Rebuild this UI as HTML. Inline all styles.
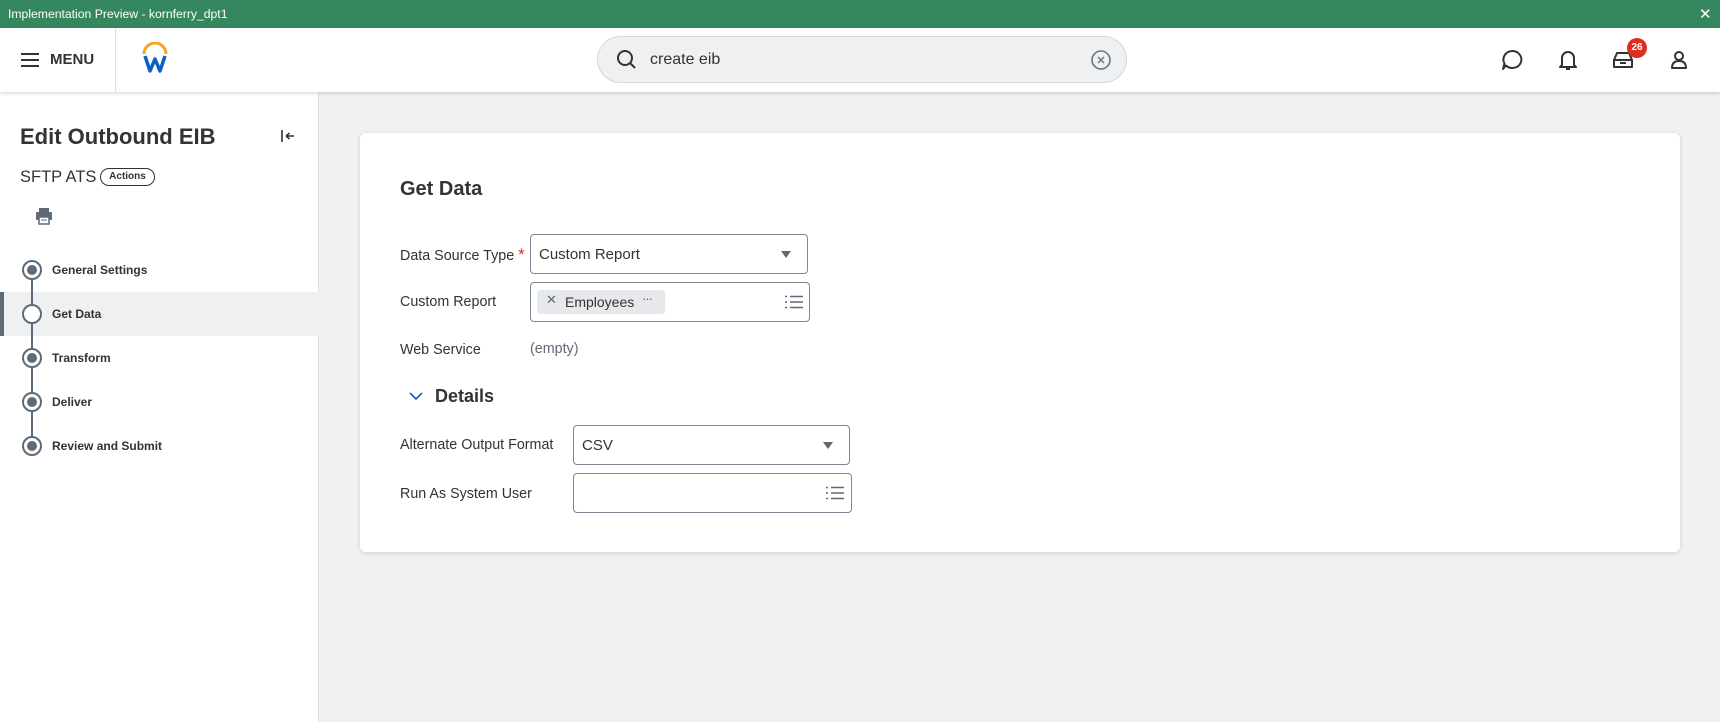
<!DOCTYPE html>
<html><head><meta charset="utf-8"><style>
*{box-sizing:border-box;margin:0;padding:0}
body{width:1720px;height:722px;overflow:hidden;background:#f0f1f2;font-family:"Liberation Sans",Arial,sans-serif;color:#333;position:relative}
.abs{position:absolute}
.top{left:0;top:0;width:1720px;height:28px;background:#35875f;color:#fff;font-size:12.2px;line-height:28px;padding-left:8px}
.hdr{left:0;top:28px;width:1720px;height:64px;background:#fff;box-shadow:0 2px 3px rgba(0,0,0,.12);z-index:2}
.side{left:0;top:92px;width:319px;height:630px;background:#fff;border-right:1px solid #dcdfe2}
.card{left:360px;top:133px;width:1320px;height:419px;background:#fff;border-radius:6px;box-shadow:0 1px 4px rgba(0,0,0,.15)}
.lbl{font-size:14.3px;color:#333}
.box{border:1px solid #7b8794;border-radius:4px;background:#fff}
.step{left:52px;font-size:12px;font-weight:bold;color:#333}
.circ{left:22px;width:20px;height:20px;border:2px solid #5e6a75;border-radius:50%;background:#fff}
.circ.f::after{content:"";position:absolute;left:3px;top:3px;width:10px;height:10px;border-radius:50%;background:#5e6a75}
</style></head><body>
<div class="abs top">Implementation Preview - kornferry_dpt1</div>
<div class="abs" style="left:1699px;top:5px;color:#fff;font-size:15px">✕</div>
<div class="abs hdr">
  <svg class="abs" style="left:20px;top:24px" width="20" height="16"><path d="M1 2H19M1 8H19M1 14H19" stroke="#333" stroke-width="2"/></svg>
  <div class="abs" style="left:50px;top:23px;font-size:15px;font-weight:bold;color:#333">MENU</div>
  <div class="abs" style="left:115px;top:0;width:1px;height:64px;background:#dcdfe2"></div>
  <svg class="abs" style="left:140px;top:14px" width="30" height="32"><path d="M4 12 A11 11 0 0 1 26 12" stroke="#f5a623" stroke-width="3" fill="none"/><path d="M5 14 L10 29 L15 17 L20 29 L25 14" stroke="#0a5fc4" stroke-width="3.5" fill="none" stroke-linejoin="round"/></svg>
  <div class="abs" style="left:597px;top:8px;width:530px;height:47px;border:1px solid #d4d7db;border-radius:24px;background:#eff0f2"></div>
  <svg class="abs" style="left:616px;top:21px" width="22" height="22"><circle cx="9" cy="9" r="7" stroke="#333" stroke-width="2" fill="none"/><path d="M14 14 L19 19" stroke="#333" stroke-width="2"/></svg>
  <div class="abs" style="left:650px;top:23px;font-size:16px;color:#333">create eib</div>
  <svg class="abs" style="left:1090px;top:21px" width="22" height="22"><circle cx="11" cy="11" r="9" stroke="#6b7580" stroke-width="1.6" fill="none"/><path d="M8 8L14 14M14 8L8 14" stroke="#6b7580" stroke-width="1.5"/></svg>
  <svg class="abs" style="left:1500px;top:20px" width="24" height="24"><path d="M12 3a9 8.5 0 1 1 -6 14.5 L3 21 L4.5 15.5 A9 8.5 0 0 1 12 3z" stroke="#333" stroke-width="2" fill="none" stroke-linejoin="round"/></svg>
  <svg class="abs" style="left:1556px;top:19px" width="24" height="26"><path d="M6 18V11a6 6 0 0 1 12 0v7l2 2H4z" stroke="#333" stroke-width="2" fill="none" stroke-linejoin="round"/><path d="M10 22h4" stroke="#333" stroke-width="2"/></svg>
  <svg class="abs" style="left:1611px;top:20px" width="24" height="24"><path d="M3 12 L6 5 H18 L21 12 V19 H3z M3 12 H21 M9 15 H15" stroke="#333" stroke-width="2" fill="none" stroke-linejoin="round"/></svg>
  <div class="abs" style="left:1627px;top:10px;width:20px;height:20px;border-radius:10px;background:#de2e21;color:#fff;font-size:10px;font-weight:bold;text-align:center;line-height:20px">26</div>
  <svg class="abs" style="left:1668px;top:21px" width="22" height="22"><circle cx="11" cy="7" r="4" stroke="#333" stroke-width="2" fill="none"/><path d="M4 19 Q4 12 11 12 Q18 12 18 19z" stroke="#333" stroke-width="2" fill="none" stroke-linejoin="round"/></svg>
</div>
<div class="abs side">
  <div class="abs" style="left:20px;top:32px;font-size:22px;font-weight:bold;color:#333">Edit Outbound EIB</div>
  <svg class="abs" style="left:280px;top:36px" width="16" height="16"><path d="M2 2V14M6 8H14M6 8L9.5 5M6 8L9.5 11" stroke="#333" stroke-width="1.6" fill="none"/></svg>
  <div class="abs" style="left:20px;top:76px;font-size:16.5px;color:#333">SFTP ATS</div>
  <div class="abs" style="left:100px;top:76px;width:55px;height:18px;border:1.5px solid #333;border-radius:9px;font-size:10px;font-weight:bold;text-align:center;line-height:15px">Actions</div>
  <svg class="abs" style="left:35px;top:115px" width="18" height="18"><rect x="4" y="1" width="10" height="4" fill="#5e6a75"/><rect x="1" y="5" width="16" height="8" rx="1" fill="#5e6a75"/><rect x="4" y="10" width="10" height="7" fill="#fff" stroke="#5e6a75" stroke-width="1.5"/><path d="M6 13h6" stroke="#5e6a75"/></svg>
  <div class="abs" style="left:0;top:200px;width:319px;height:44px;background:#eff0f2"></div>
  <div class="abs" style="left:0;top:200px;width:4px;height:44px;background:#5e6a75"></div>
  <div class="abs" style="left:31px;top:178px;width:2px;height:176px;background:#5e6a75"></div>
  <div class="abs circ f" style="top:168px"></div><div class="abs step" style="top:171px">General Settings</div>
  <div class="abs circ" style="top:212px"></div><div class="abs step" style="top:215px">Get Data</div>
  <div class="abs circ f" style="top:256px"></div><div class="abs step" style="top:259px">Transform</div>
  <div class="abs circ f" style="top:300px"></div><div class="abs step" style="top:303px">Deliver</div>
  <div class="abs circ f" style="top:344px"></div><div class="abs step" style="top:347px">Review and Submit</div>
</div>
<div class="abs card">
  <div class="abs" style="left:40px;top:45px;font-size:20px;font-weight:bold;color:#333">Get Data</div>
  <div class="abs lbl" style="left:40px;top:112px">Data Source Type <span style="color:#de2e21;font-size:17px">*</span></div>
  <div class="abs box" style="left:170px;top:101px;width:278px;height:40px"><div class="abs" style="left:8px;top:11px;font-size:15px;color:#333">Custom Report</div><div class="abs" style="right:16px;top:16px;border:5.5px solid transparent;border-top:7px solid #5e6a75;border-bottom:0"></div></div>
  <div class="abs lbl" style="left:40px;top:161px">Custom Report</div>
  <div class="abs box" style="left:170px;top:149px;width:280px;height:40px">
    <div class="abs" style="left:6px;top:7px;width:128px;height:24px;background:#e6e8eb;border-radius:3px"></div>
    <div class="abs" style="left:15px;top:9px;font-size:13px;color:#5e6a75">✕</div>
    <div class="abs" style="left:34px;top:11px;font-size:14px;color:#333">Employees</div>
    <div class="abs" style="left:111px;top:8px;font-size:13px;color:#5e6a75;letter-spacing:-1px">···</div>
    <svg class="abs" style="left:254px;top:12px" width="18" height="14"><path d="M0 1.5h2M5 1.5h13M0 7h2M5 7h13M0 12.5h2M5 12.5h13" stroke="#5e6a75" stroke-width="1.6"/></svg>
  </div>
  <div class="abs lbl" style="left:40px;top:209px">Web Service</div>
  <div class="abs" style="left:170px;top:208px;font-size:14.3px;color:#5e6a75">(empty)</div>
  <svg class="abs" style="left:49px;top:258px" width="14" height="10"><path d="M1 2L7 8L13 2" stroke="#0a5fc4" stroke-width="1.6" fill="none"/></svg>
  <div class="abs" style="left:75px;top:253px;font-size:18px;font-weight:bold;color:#333">Details</div>
  <div class="abs lbl" style="left:40px;top:304px">Alternate Output Format</div>
  <div class="abs box" style="left:213px;top:292px;width:277px;height:40px"><div class="abs" style="left:8px;top:11px;font-size:15px;color:#333">CSV</div><div class="abs" style="right:16px;top:16px;border:5.5px solid transparent;border-top:7px solid #5e6a75;border-bottom:0"></div></div>
  <div class="abs lbl" style="left:40px;top:353px">Run As System User</div>
  <div class="abs box" style="left:213px;top:340px;width:279px;height:40px"><svg class="abs" style="left:252px;top:12px" width="18" height="14"><path d="M0 1.5h2M5 1.5h13M0 7h2M5 7h13M0 12.5h2M5 12.5h13" stroke="#5e6a75" stroke-width="1.6"/></svg></div>
</div>
</body></html>
